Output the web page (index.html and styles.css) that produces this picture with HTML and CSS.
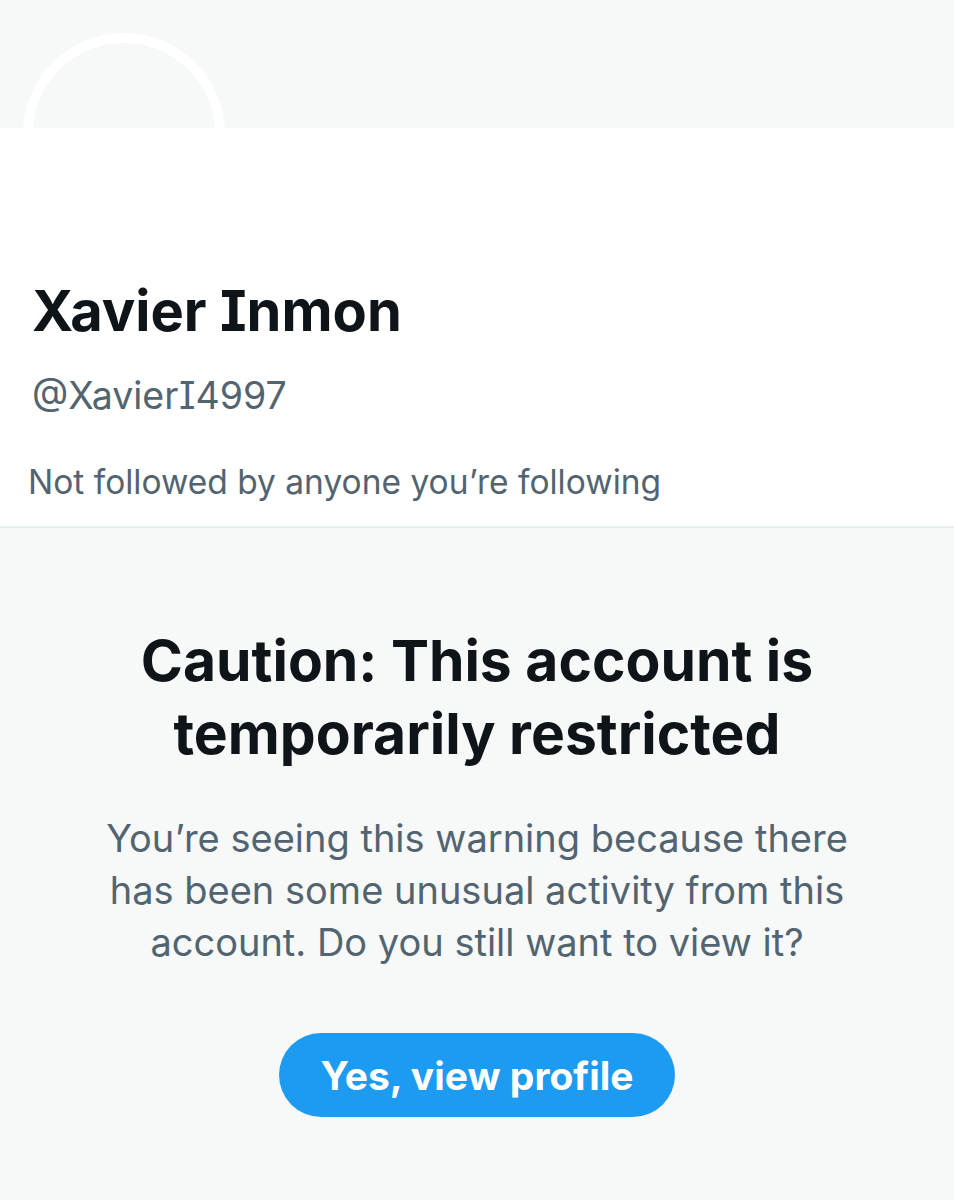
FILE: index.html
```html
<!DOCTYPE html>
<html>
<head>
<meta charset="utf-8">
<link rel="stylesheet" href="styles.css">
</head>
<body>
<div class="page">
  <header class="banner">
    <div class="avatar"></div>
  </header>
  <section class="profile">
    <h1 class="name">Xavier Inmon</h1>
    <div class="handle">@XavierI4997</div>
    <div class="followed">Not followed by anyone you’re following</div>
  </section>
  <section class="warning">
    <h2 class="title">Caution: This account is temporarily restricted</h2>
    <p class="desc">You’re seeing this warning because there has been some unusual activity from this account. Do you still want to view it?</p>
    <button class="btn">Yes, view profile</button>
  </section>
</div>
</body>
</html>
```
FILE: styles.css
```css
* { box-sizing: border-box; }
html, body { margin: 0; padding: 0; }
body {
  background: #f7f9f9;
  font-family: Inter, Roboto, "Noto Sans", sans-serif;
  font-feature-settings: "cv08" 1;
  color: #0f1419;
  width: 954px;
  height: 1200px;
  overflow: hidden;
}
.page { position: relative; }
.banner {
  height: 128px;
  background: #f7f9f9;
  position: relative;
}
.avatar {
  position: absolute;
  left: 23px;
  top: 33px;
  width: 202px;
  height: 202px;
  border-radius: 50%;
  border: 10px solid #ffffff;
  background: #f7f9f9;
}
.profile {
  position: relative;
  background: #ffffff;
  height: 400px;
  padding: 0 28px 0 32px;
  border-bottom: 2px solid #e7ecee;
}
.name {
  margin: 0;
  padding-top: 150px;
  font-size: 56px;
  font-weight: 700;
  line-height: 66px;
}
.handle {
  margin-top: 30px;
  font-size: 37.5px;
  line-height: 44px;
  color: #536471;
}
.followed {
  margin-top: 44px;
  margin-left: -4px;
  font-size: 33.5px;
  line-height: 40px;
  color: #536471;
}
.warning {
  display: flex;
  flex-direction: column;
  align-items: center;
  text-align: center;
  padding-top: 96px;
}
.title {
  margin: 0;
  width: 760px;
  font-size: 57px;
  font-weight: 700;
  line-height: 73px;
}
.desc {
  margin: 42px 0 0;
  width: 760px;
  font-size: 38px;
  line-height: 52px;
  color: #536471;
}
.btn {
  margin-top: 65px;
  width: 396px;
  height: 84px;
  border: none;
  border-radius: 42px;
  background: #1d9bf0;
  color: #ffffff;
  font-family: Inter, Roboto, "Noto Sans", sans-serif;
  font-size: 39px;
  font-weight: 700;
}
```
